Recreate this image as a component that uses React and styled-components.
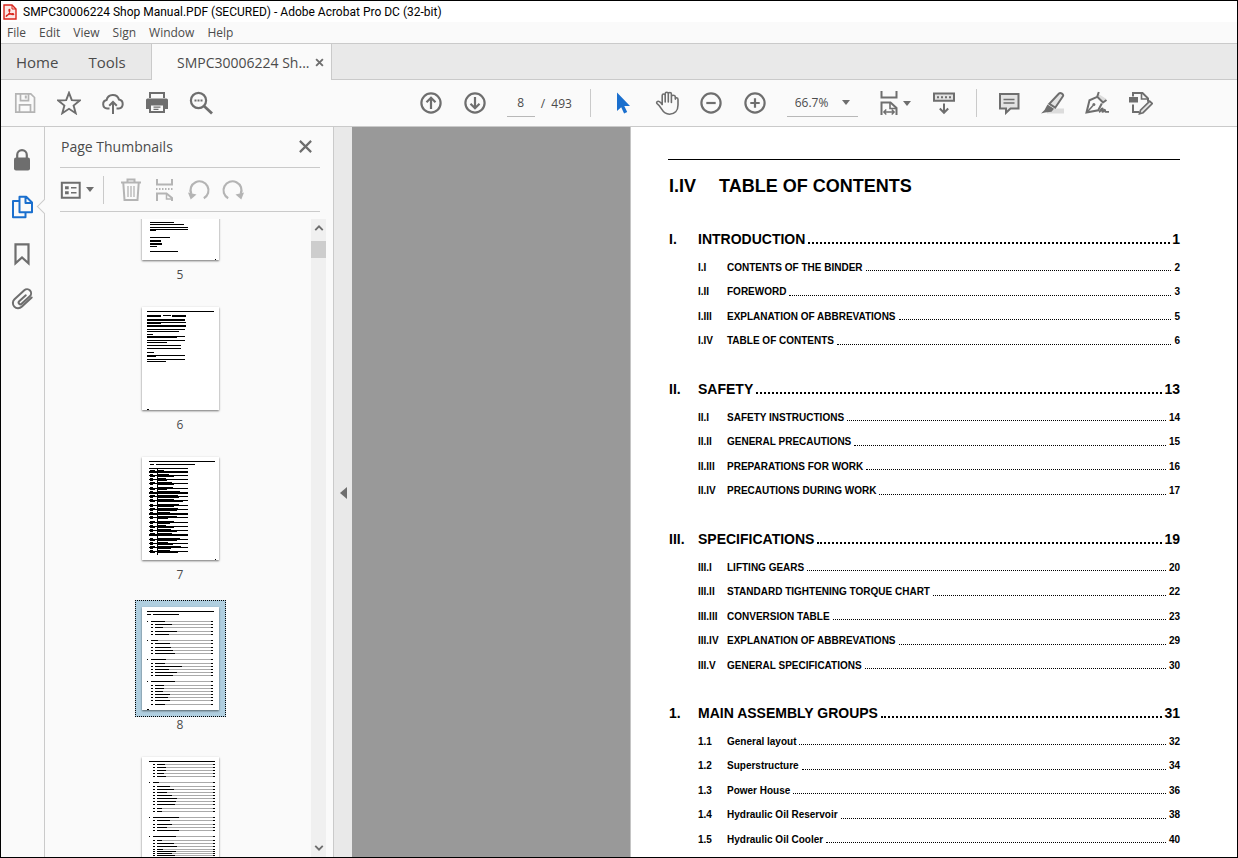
import React, { useLayoutEffect, useRef } from 'react';
import styled, { createGlobalStyle, css } from 'styled-components';

const GlobalStyle = createGlobalStyle`
  * {
    box-sizing: border-box;
  }

  body {
    margin: 0;
    font-family: 'Open Sans', 'Noto Sans', sans-serif;
    font-size: 12px;
    color: #4b4b4b;
  }

  button,
  input,
  select {
    font: inherit;
    color: inherit;
  }

  ul,
  ol {
    list-style: none;
    margin: 0;
    padding: 0;
  }
`;

const Window = styled.div`
  display: flex;
  flex-direction: column;
  height: 100vh;
  overflow: hidden;
  border: 1px solid #000;
  background: #fafafa;
`;

const TitleBar = styled.header`
  display: flex;
  align-items: center;
  gap: 6px;
  height: 21px;
  padding-left: 2px;
  background: #fff;
`;

const WindowTitle = styled.h1`
  margin: 0;
  font-family: Roboto, 'Open Sans', sans-serif;
  font-size: 12px;
  font-weight: normal;
  color: #000;
  white-space: nowrap;
`;

const MenuBar = styled.nav`
  display: flex;
  gap: 13px;
  height: 21px;
  padding-left: 6px;
`;

const MenuItem = styled.button`
  padding: 0;
  border: 0;
  background: none;
`;

const TabBar = styled.div`
  display: flex;
  height: 37px;
  border-top: 1px solid #cacaca;
  border-bottom: 1px solid #cacaca;
  background: #e9e9e9;
`;

const Tab = styled.button`
  padding: 0 15px;
  border: 0;
  background: none;
  font-size: 15px;
`;

const HomeTabs = styled.div`
  display: flex;
  width: 150px;
`;

const DocumentTab = styled.div`
  display: flex;
  align-items: center;
  gap: 6px;
  width: 181px;
  height: 36px;
  padding-left: 10px;
  border-left: 1px solid #cacaca;
  border-right: 1px solid #cacaca;
  background: #fafafa;
`;

const DocumentName = styled(Tab)`
  padding: 0 0 0 15px;
  font-size: 14px;
  white-space: nowrap;
`;

const IconButton = styled.button`
  display: flex;
  align-items: center;
  justify-content: center;
  flex: none;
  width: ${({ $width }) => $width || 44}px;
  height: ${({ $height }) => $height || 44}px;
  padding: 0;
  border: 0;
  background: none;
  color: ${({ $tone }) => $tone || '#6e6e6e'};

  svg {
    flex: none;
  }
`;

const Toolbar = styled.div`
  display: flex;
  align-items: center;
  height: 47px;
  padding-left: 2px;
  border-bottom: 1px solid #cacaca;
`;

const ToolGroup = styled.div`
  display: flex;
  align-items: center;
`;

const Spacer = styled.div`
  flex: ${({ $grow }) => $grow} 0 0;
`;

const Divider = styled.div`
  width: 1px;
  height: 28px;
  margin: ${({ $margin }) => $margin || '0 10px'};
  background: #cacaca;
`;

const PageInput = styled.input`
  width: 28px;
  height: 28px;
  margin-left: 10px;
  padding: 0;
  border: 0;
  border-bottom: 1px solid #b8b8b8;
  background: none;
  text-align: center;
`;

const PageCount = styled.span`
  width: 35px;
  margin: 0 4px 0 6px;
  white-space: pre;
`;

const ZoomField = styled.div`
  display: flex;
  align-items: center;
  width: 71px;
  height: 28px;
  margin: 0 12px 0 10px;
  padding-right: 8px;
  border-bottom: 1px solid #b8b8b8;
`;

const ZoomSelect = styled.select`
  flex: 1;
  min-width: 0;
  padding: 0 0 0 8px;
  border: 0;
  background: none;
  appearance: none;
`;

const Caret = styled.span`
  flex: none;
  border: 4px solid transparent;
  border-top: 5px solid #6e6e6e;
  border-bottom: 0;
`;

const FitButton = styled(IconButton)`
  justify-content: flex-start;
  gap: 2px;
  padding-left: 7px;
`;

const OptionsButton = styled(IconButton)`
  justify-content: flex-start;
  gap: 4px;
`;

const Main = styled.div`
  display: flex;
  flex: 1;
  min-height: 0;
`;

const Rail = styled.nav`
  display: flex;
  flex-direction: column;
  width: 44px;
  padding-top: 9px;
  border-right: 1px solid #cacaca;
`;

const RailButton = styled(IconButton)`
  position: relative;

  ${({ $active }) => $active && css`
    &::after {
      content: '';
      position: absolute;
      top: 18px;
      right: -7px;
      width: 10px;
      height: 10px;
      border-left: 1px solid #cacaca;
      border-bottom: 1px solid #cacaca;
      background: #fafafa;
      transform: rotate(45deg);
    }
  `}
`;

const Panel = styled.aside`
  display: flex;
  flex-direction: column;
  width: 289px;
  border-right: 1px solid #cacaca;
`;

const PanelHeader = styled.div`
  display: flex;
  align-items: center;
  justify-content: space-between;
  height: 41px;
  margin: 0 13px 0 15px;
  padding: 0 0 2px 1px;
  border-bottom: 1px solid #cacaca;
`;

const PanelTitle = styled.h2`
  margin: 0;
  font-size: 14px;
  font-weight: normal;
`;

const PanelTools = styled.div`
  display: flex;
  align-items: center;
  height: 44px;
  margin: 0 13px 7px 15px;
  border-bottom: 1px solid #cacaca;
`;

const PanelBody = styled.div`
  display: flex;
  flex: 1;
  min-height: 0;
`;

const ThumbList = styled.ol`
  flex: 1;
  overflow-y: auto;
  scrollbar-width: none;
`;

const ThumbItem = styled.li`
  display: flex;
  flex-direction: column;
  align-items: center;
  height: 150px;
  padding-left: 4px;
`;

const ThumbFrame = styled.button`
  display: block;
  padding: 6px;
  border: 1px dotted ${({ $selected }) => ($selected ? '#000' : 'transparent')};
  background: ${({ $selected }) => ($selected ? '#b0cfe0' : 'none')};

  svg {
    display: block;
    background: #fff;
    box-shadow: 0 1px 2px rgba(0, 0, 0, 0.55);
  }
`;

const ThumbLabel = styled.span`
  line-height: 16px;
`;

const ScrollBar = styled.div`
  display: flex;
  flex-direction: column;
  width: 15px;
  margin-right: 7px;
  background: #f0f0f0;
`;

const ScrollThumb = styled.div`
  height: 17px;
  margin-top: 4px;
  margin-bottom: auto;
  background: #cdcdcd;
`;

const Splitter = styled.button`
  display: flex;
  align-items: center;
  justify-content: center;
  width: 18px;
  padding: 2px 0 0;
  border: 0;
  background: #e9e9e9;
`;

const SplitterArrow = styled.span`
  border: 6px solid transparent;
  border-right: 7px solid #6e6e6e;
  border-left: 0;
`;

const Canvas = styled.main`
  flex: 1;
  min-width: 0;
  overflow: hidden;
  padding-left: 278px;
  background: #999;
`;

const Page = styled.article`
  min-height: 100%;
  padding: 32px 57px 0 37px;
  border-left: 1px solid #c4c4c4;
  background: #fff;
  color: #000;
  font-family: 'Liberation Sans', Arial, sans-serif;
  font-weight: bold;
`;

const PageTitle = styled.h2`
  display: flex;
  margin: 0 0 27px;
  padding: 16px 0 0 1px;
  border-top: 1px solid #000;
  font-size: 18px;
  line-height: 20px;
`;

const TitleNumber = styled.span`
  width: 50px;
`;

const Section = styled.section`
  margin-bottom: 20px;
  padding-left: 1px;
`;

const EntryNumber = styled.span`
  flex: none;
  width: 29px;
`;

const Leader = styled.span`
  flex: 1;
  align-self: center;
  height: 10px;
  margin: 0 2px 0 3px;
  border-bottom: ${({ $weight }) => $weight}px dotted #000;
`;

const SectionHeading = styled.h3`
  display: flex;
  align-items: center;
  height: 32px;
  margin: 0;
  font-size: 14px;
  white-space: nowrap;
`;

const Entry = styled.li`
  display: flex;
  align-items: center;
  height: 24px;
  margin-left: 29px;
  font-size: 10px;
  white-space: nowrap;

  &:nth-child(even) {
    height: 25px;
  }

  ${Leader} {
    height: 8px;
    margin-right: 3px;
  }
`;

const contents = [
  {
    number: 'I.',
    title: 'INTRODUCTION',
    page: 1,
    entries: [
      ['I.I', 'CONTENTS OF THE BINDER', 2],
      ['I.II', 'FOREWORD', 3],
      ['I.III', 'EXPLANATION OF ABBREVATIONS', 5],
      ['I.IV', 'TABLE OF CONTENTS', 6],
    ],
  },
  {
    number: 'II.',
    title: 'SAFETY',
    page: 13,
    entries: [
      ['II.I', 'SAFETY INSTRUCTIONS', 14],
      ['II.II', 'GENERAL PRECAUTIONS', 15],
      ['II.III', 'PREPARATIONS FOR WORK', 16],
      ['II.IV', 'PRECAUTIONS DURING WORK', 17],
    ],
  },
  {
    number: 'III.',
    title: 'SPECIFICATIONS',
    page: 19,
    entries: [
      ['III.I', 'LIFTING GEARS', 20],
      ['III.II', 'STANDARD TIGHTENING TORQUE CHART', 22],
      ['III.III', 'CONVERSION TABLE', 23],
      ['III.IV', 'EXPLANATION OF ABBREVATIONS', 29],
      ['III.V', 'GENERAL SPECIFICATIONS', 30],
    ],
  },
  {
    number: '1.',
    title: 'MAIN ASSEMBLY GROUPS',
    page: 31,
    entries: [
      ['1.1', 'General layout', 32],
      ['1.2', 'Superstructure', 34],
      ['1.3', 'Power House', 36],
      ['1.4', 'Hydraulic Oil Reservoir', 38],
      ['1.5', 'Hydraulic Oil Cooler', 40],
    ],
  },
];

const thumbnails = [
  { page: 5, label: true },
  { page: 6, label: true },
  { page: 7, label: true },
  { page: 8, label: true },
  { page: 9, label: false },
];

// Marks of each miniature page: [x, y, width, height]
const thumbMarks = {
  5: [
    [8, 65, 24, 1], [8, 67, 34, 1], [8, 70, 38, 1], [8, 72, 38, 1], [8, 73, 6, 1],
    [8, 80, 20, 1], [8, 83, 11, 2], [8, 86, 12, 2], [8, 89, 7, 1], [8, 94, 28, 1], [73, 102, 1, 1],
  ],
  6: [
    [5, 4, 67, 1], [5, 8, 14, 2], [21, 8, 8, 1], [30, 8, 14, 2], [5, 12, 38, 2], [5, 15, 39, 1],
    [5, 16, 14, 1], [5, 18, 39, 2], [5, 22, 38, 1], [5, 24, 32, 1], [5, 27, 6, 1], [5, 29, 38, 1],
    [5, 30, 30, 1], [5, 33, 38, 1], [5, 35, 20, 1], [5, 38, 34, 1], [5, 41, 34, 1],
    [5, 45, 7, 1], [5, 48, 38, 1], [5, 49, 9, 1], [5, 52, 38, 1], [5, 54, 19, 1], [5, 102, 2, 1],
  ],
  7: [[7, 4, 66, 1], [8, 7, 4, 1], [14, 7, 39, 1], [7, 11, 39, 1], [15, 11, 1, 87], [73, 102, 1, 1]],
  8: [[5, 4, 67, 1], [5, 7, 4, 1], [11, 7, 26, 1], [5, 102, 2, 1]],
  9: [[7, 4, 66, 1]],
};

const glossaryWidths = [
  6, 12, 11, 16, 8, 9, 14, 16, 15, 9, 22, 14, 20, 21, 16, 25, 21, 16, 20, 19,
  12, 22, 19, 10, 16, 12, 8, 16, 13, 19, 14, 18, 22, 19, 10, 15, 23, 13, 12, 20,
];

// [y, heading, width of title]
const tocLines8 = [
  [14, 1, 14], [17, 0, 17], [20, 0, 8], [24, 0, 22], [27, 0, 14],
  [33, 1, 7], [36, 0, 15], [40, 0, 16], [43, 0, 18], [46, 0, 20],
  [52, 1, 15], [56, 0, 10], [59, 0, 27], [62, 0, 14], [65, 0, 22], [68, 0, 18],
  [74, 1, 24], [78, 0, 9], [81, 0, 9], [84, 0, 8], [87, 0, 15], [90, 0, 13], [93, 0, 15], [97, 0, 10],
];

const tocLines9 = [
  [7, 0, 8], [10, 0, 9], [13, 0, 9], [16, 0, 7], [19, 0, 9], [25, 1, 6],
  [29, 0, 13], [32, 0, 17], [35, 0, 10], [38, 0, 15], [41, 0, 20], [44, 0, 19], [47, 0, 18],
  [51, 0, 5], [54, 0, 5], [60, 1, 26], [63, 0, 13], [67, 0, 15], [70, 0, 10], [73, 0, 22],
  [79, 1, 23], [83, 0, 5], [86, 0, 17], [89, 0, 20], [92, 0, 6], [94, 0, 19], [96, 0, 15], [98, 0, 18], [101, 0, 12],
];

const Icon = ({ size = 24, children, ...rest }) => (
  <svg
    width={size}
    height={size}
    viewBox="0 0 24 24"
    fill="none"
    stroke="currentColor"
    strokeWidth="2"
    aria-hidden="true"
    {...rest}
  >
    {children}
  </svg>
);

const AcrobatIcon = () => (
  <svg width="14" height="16" viewBox="0 0 14 16" fill="none" aria-hidden="true">
    <path d="M1 1h8l4 4v10H1z" fill="#fbe9e7" stroke="#d9251c" strokeWidth="1.4" />
    <path d="M9 1v4h4" stroke="#d9251c" />
    <path
      d="M3.5 12.3c1.5-.6 3.4-4 3.4-6 0-1.2-1-1.2-1 0 0 2 2.2 4.5 4.3 4.4 1-.1.8-1.1-.6-1.1-2 0-4.4.7-5.7 1.6-.8.6-1 1.3-.4 1.1z"
      stroke="#d9251c"
      strokeWidth="1.1"
    />
  </svg>
);

const SaveIcon = () => (
  <Icon strokeWidth="1.7">
    <path d="M2.8 2.8h15l3.7 3.7v14.7H2.8z" />
    <path d="M7.5 3v6.7h8V3M6.5 21v-7.2h11V21" />
    <path d="M12.8 4.5v3" strokeWidth="2" />
  </Icon>
);

const StarIcon = () => (
  <Icon strokeWidth="1.9">
    <path d="M12 1.8l2.8 7.3 8 .4-6.2 5 2.1 7.7-6.7-4.4-6.7 4.4 2.1-7.7-6.2-5 8-.4z" />
  </Icon>
);

const CloudIcon = () => (
  <Icon>
    <path d="M8.5 17.5H6.200a4.3 4.3 0 0 1-.6-8.500A6.400 6.400 0 0 1 18 8.600a4.5 4.5 0 0 1-.3 8.900h-2.200" />
    <path d="M12 23V11.500M8.200 14.800L12 11l3.800 3.800" />
  </Icon>
);

const PrintIcon = () => (
  <Icon stroke="none" fill="currentColor">
    <path d="M4 1h16v6H4z" />
    <path d="M6 3h12v4H6z" fill="#fafafa" />
    <path d="M2.500 7.500h19a1.500 1.500 0 0 1 1.500 1.500v9h-4v-4H5v4H1V9a1.500 1.500 0 0 1 1.500-1.500z" />
    <path d="M4 13h16v9H4z" />
    <path d="M6 14.500h12V20H6z" fill="#fafafa" />
    <path d="M8.500 15.500h7v1.200h-7zM8.500 17.700h5v1.200h-5z" />
  </Icon>
);

const SearchIcon = () => (
  <Icon strokeWidth="2.2">
    <circle cx="9.5" cy="9.5" r="7.6" />
    <path d="M15 15l8 7.500" strokeWidth="2.8" />
    <path d="M5.500 9.500h2M8.500 9.500h2M11.500 9.500h2" />
  </Icon>
);

const CircleIcon = ({ children }) => (
  <Icon strokeWidth="2.2">
    <circle cx="12" cy="12" r="9.6" />
    {children}
  </Icon>
);

const PointerIcon = () => (
  <Icon stroke="none" fill="currentColor">
    <path d="M6 1.500v18.500l4.200-3.800 2.900 6.300 3.100-1.400-2.900-6.100h5.700z" />
  </Icon>
);

const HandIcon = () => (
  <Icon strokeWidth="1.6" strokeLinejoin="round" strokeLinecap="round">
    <path d="M7.200 13.500V4.500a1.500 1.500 0 0 1 3 0v6.500V2.800a1.500 1.500 0 0 1 3.100 0v8.200V3a1.500 1.500 0 0 1 3.100 0v8.500V5.600c0-1.900 3.600-1.900 3.900 0v2.500c.2-1.900 2.700-1.600 2.700.3v5.600c0 5.800-3.400 9.200-8.500 9.200-3.900 0-6-1.900-8-5.300-1.200-2.100-2.200-3.700-4.400-5.300-1.300-1 .4-3.100 2.300-2 1.400.8 2 1.700 2.800 2.900z" />
  </Icon>
);

const FitIcon = () => (
  <Icon>
    <path d="M4.500 0v6.500h15V0" />
    <path d="M4.500 24V11.500h9l6 5.500v7" />
    <path d="M13 11.500v6h6" strokeWidth="1.6" />
    <path d="M7 21h10M9.300 18.500L6.800 21l2.500 2.500M14.700 18.500l2.500 2.500-2.500 2.500" strokeWidth="1.4" />
  </Icon>
);

const ScrollModeIcon = () => (
  <Icon>
    <path d="M2 2.500h20v7.300H2z" fill="#e3e3e3" />
    <path d="M5 6.200h15" strokeDasharray="2 2" />
    <path d="M12 12.500V21M7.800 17.500l4.200 4.300 4.200-4.300" />
  </Icon>
);

const CommentIcon = () => (
  <Icon>
    <path d="M3 3h18.500v14.500h-8L9 21.800v-4.300H3z" fill="#e3e3e3" />
    <path d="M6.500 8.500h11M6.500 12h11" strokeWidth="1.3" />
  </Icon>
);

const HighlightIcon = () => (
  <Icon>
    <path d="M6 17.500h17v5H6z" fill="#dcdcdc" stroke="none" />
    <path d="M18 2.500c1.600-1.300 5 .9 3.900 2.800l-7.700 11.400-5.900-3.900z" fill="#e3e3e3" />
    <path d="M6.500 13.500l6.500 4.300-2.500 2.900-6.500.8L0 22.500 3.500 19z" fill="currentColor" stroke="none" />
  </Icon>
);

const SignIcon = () => (
  <Icon strokeWidth="2">
    <path d="M13.500 3l8 5-3.500 3-5.500-5z" fill="#dcdcdc" stroke="none" />
    <path d="M13.800 1l-1.600 4.800L18 11.500l3.500-2.500M12.200 5.800L4.500 9.300 1.500 21.500l11.700-2.200 3.600-6.800" />
    <path d="M1.800 21.500l6.200-7" strokeWidth="1.5" />
    <circle cx="8.900" cy="13.500" r="1.500" fill="currentColor" stroke="none" />
    <path d="M14 21c1.600-.6 2.600-4.300 3.600-3.500.7.600-1 3 0 3.300 1 .1 1.600-2.500 2.300-1.900.6.500-.1 1.900.6 2h3.500" strokeWidth="1.900" />
  </Icon>
);

const EditPdfIcon = () => (
  <Icon>
    <path d="M0 6h9v5.500H0z" fill="currentColor" stroke="none" />
    <path d="M4 5.500V2h9.500L19 7.400v3.300M4 13.500v7.500h6" />
    <path d="M12.500 2v6h6" strokeWidth="1.6" />
    <path d="M20.700 10.200l2.600 2.400-9.200 9.100-3.600 1 1-3.500z" fill="#e3e3e3" strokeWidth="1.7" />
  </Icon>
);

const LockIcon = () => (
  <Icon strokeWidth="2.2">
    <path d="M7.200 11V7a4.800 4.800 0 0 1 9.600 0v4" />
    <rect x="4" y="9.5" width="16" height="13" rx="2" fill="currentColor" stroke="none" />
  </Icon>
);

const PagesIcon = () => (
  <Icon strokeLinejoin="round">
    <path d="M9.500 1.800h6.700l5.800 5.700v9.700H9.500zM15.500 2v6h6" />
    <path d="M9 6H3v16.200h12.500v-4.500" />
  </Icon>
);

const BookmarkIcon = () => (
  <Icon strokeWidth="2.2">
    <path d="M5.500 2.300h13v19L12 15.500l-6.500 5.800z" />
  </Icon>
);

const ClipIcon = () => (
  <Icon strokeLinecap="round">
    <path d="M15.800 8.300l-6.600 6a1.700 1.700 0 0 0 2.400 2.500l8.200-7.600a4 4 0 0 0-5.500-5.900L4.500 12.200a5.200 5.200 0 0 0 7.200 7.600l10-9.300" />
  </Icon>
);

const CloseIcon = ({ size, weight }) => (
  <Icon size={size} strokeWidth={weight}>
    <path d="M3 3l18 18M21 3L3 21" />
  </Icon>
);

const OptionsIcon = () => (
  <Icon size={22} strokeWidth="2.2">
    <path d="M2 4h19.500v16.500H2z" />
    <path d="M5.500 9.500h4M5.500 15h4" strokeWidth="3.3" />
    <path d="M12 9.500h6M12 15h6" strokeWidth="1.8" />
  </Icon>
);

const TrashIcon = () => (
  <Icon>
    <path d="M2 4.500h20M8.500 4V1.500h7V4M4.300 5l1.200 17h13l1.200-17" />
    <path d="M9 8v11M12 8v11M15 8v11" strokeWidth="1.3" />
  </Icon>
);

const SplitIcon = () => (
  <Icon>
    <path d="M4 1v5.500h15V1M4 23v-7.500h9.500L19 20v3" />
    <path d="M13.500 16v5h5" strokeWidth="1.5" />
    <path d="M3 11h18" strokeDasharray="1.5 1.5" strokeWidth="1.8" />
  </Icon>
);

const RotateIcon = ({ clockwise }) => (
  <Icon strokeWidth="2.2">
    <g transform={clockwise ? 'translate(24 0) scale(-1 1)' : undefined}>
      <path d="M4.300 16a9 9 0 1 1 12.500 4.200" />
      <path d="M1 14.500l8.500 2-5.800 5z" fill="currentColor" stroke="none" />
    </g>
  </Icon>
);

const ChevronIcon = ({ down }) => (
  <Icon size={10} strokeWidth="4.5">
    <path d={down ? 'M3 7l9 9 9-9' : 'M3 17l9-9 9 9'} />
  </Icon>
);

const TocMarks = ({ lines, left, right }) => lines.map(([y, heading, width]) => {
  const start = left + (heading ? 4 : 8);
  return (
    <g key={y}>
      <rect x={heading ? left : left + 4} y={y} width={heading ? 1 : 2} height="1" />
      <rect x={start} y={y} width={width} height="1" />
      <rect x={start + width} y={y} width={right - start - width} height="1" fill="#aaa" />
      <rect x={right - 1} y={y} width="2" height="1" />
    </g>
  );
});

const GlossaryMarks = () => glossaryWidths.map((width, i) => {
  const y = 13 + i * 2 + Math.floor(i / 8);
  return (
    <g key={y}>
      <rect x="8" y={y} width={i % 3 ? 3 : 5} height="1" />
      <rect x="16" y={y} width={width} height="1" />
      {i % 2 === 0 && <rect x="7" y={y + 1} width="39" height={i % 5 ? 1 : 2} />}
    </g>
  );
});

const Thumbnail = ({ page }) => (
  <svg width="77" height="103" viewBox="0 0 77 103" shapeRendering="crispEdges" aria-hidden="true">
    {thumbMarks[page].map(([x, y, width, height]) => (
      <rect key={`${x}-${y}`} x={x} y={y} width={width} height={height} />
    ))}
    {page === 7 && <GlossaryMarks />}
    {page === 8 && <TocMarks lines={tocLines8} left={5} right={70} />}
    {page === 9 && <TocMarks lines={tocLines9} left={7} right={72} />}
  </svg>
);

const TopToolbar = () => (
  <Toolbar>
    <ToolGroup>
      <IconButton aria-label="Save" $tone="#b4b4b4"><SaveIcon /></IconButton>
      <IconButton aria-label="Star"><StarIcon /></IconButton>
      <IconButton aria-label="Upload"><CloudIcon /></IconButton>
      <IconButton aria-label="Print"><PrintIcon /></IconButton>
      <IconButton aria-label="Find"><SearchIcon /></IconButton>
    </ToolGroup>
    <Spacer $grow={5} />
    <ToolGroup>
      <IconButton aria-label="Previous page">
        <CircleIcon><path d="M12 18V7M7.500 11.300L12 6.800l4.500 4.500" /></CircleIcon>
      </IconButton>
      <IconButton aria-label="Next page">
        <CircleIcon><path d="M12 6v11M7.500 12.700l4.500 4.500 4.500-4.500" /></CircleIcon>
      </IconButton>
      <PageInput aria-label="Page number" defaultValue="8" />
      <PageCount>/  493</PageCount>
      <Divider />
      <IconButton aria-label="Select" $tone="#1a6fce"><PointerIcon /></IconButton>
      <IconButton aria-label="Pan"><HandIcon /></IconButton>
      <IconButton aria-label="Zoom out">
        <CircleIcon><path d="M7.300 12h9.400" /></CircleIcon>
      </IconButton>
      <IconButton aria-label="Zoom in">
        <CircleIcon><path d="M7.300 12h9.400M12 7.300v9.400" /></CircleIcon>
      </IconButton>
      <ZoomField>
        <ZoomSelect aria-label="Zoom level" defaultValue="66.7%">
          <option>66.7%</option>
          <option>100%</option>
        </ZoomSelect>
        <Caret />
      </ZoomField>
      <FitButton aria-label="Page fit" $width={52}>
        <FitIcon />
        <Caret />
      </FitButton>
      <IconButton aria-label="Scroll mode"><ScrollModeIcon /></IconButton>
      <Divider />
      <IconButton aria-label="Comment"><CommentIcon /></IconButton>
      <IconButton aria-label="Highlight"><HighlightIcon /></IconButton>
      <IconButton aria-label="Sign"><SignIcon /></IconButton>
      <IconButton aria-label="Edit PDF"><EditPdfIcon /></IconButton>
    </ToolGroup>
    <Spacer $grow={2} />
  </Toolbar>
);

const ThumbnailPanel = () => {
  const list = useRef(null);

  useLayoutEffect(() => {
    list.current.scrollTop = 69;
  }, []);

  return (
    <Panel>
      <PanelHeader>
        <PanelTitle>Page Thumbnails</PanelTitle>
        <IconButton aria-label="Close panel" $width={30} $height={30}>
          <CloseIcon size={15} weight={3.5} />
        </IconButton>
      </PanelHeader>
      <PanelTools>
        <OptionsButton aria-label="Options" $width={36}>
          <OptionsIcon />
          <Caret />
        </OptionsButton>
        <Divider $margin="0 10px 0 7px" />
        <IconButton aria-label="Delete pages" $width={34} $tone="#b4b4b4"><TrashIcon /></IconButton>
        <IconButton aria-label="Split pages" $width={34} $tone="#b4b4b4"><SplitIcon /></IconButton>
        <IconButton aria-label="Rotate left" $width={34} $tone="#b4b4b4"><RotateIcon /></IconButton>
        <IconButton aria-label="Rotate right" $width={34} $tone="#b4b4b4"><RotateIcon clockwise /></IconButton>
      </PanelTools>
      <PanelBody>
        <ThumbList ref={list}>
          {thumbnails.map(({ page, label }) => (
            <ThumbItem key={page}>
              <ThumbFrame $selected={page === 8} aria-label={`Go to page ${page}`}>
                <Thumbnail page={page} />
              </ThumbFrame>
              {label && <ThumbLabel>{page}</ThumbLabel>}
            </ThumbItem>
          ))}
        </ThumbList>
        <ScrollBar>
          <IconButton aria-label="Scroll up" $width={15} $height={18}><ChevronIcon /></IconButton>
          <ScrollThumb />
          <IconButton aria-label="Scroll down" $width={15} $height={18}><ChevronIcon down /></IconButton>
        </ScrollBar>
      </PanelBody>
    </Panel>
  );
};

const DocumentPage = () => (
  <Page>
    <PageTitle>
      <TitleNumber>I.IV</TitleNumber>
      TABLE OF CONTENTS
    </PageTitle>
    {contents.map(section => (
      <Section key={section.number}>
        <SectionHeading>
          <EntryNumber>{section.number}</EntryNumber>
          {section.title}
          <Leader $weight={2} />
          {section.page}
        </SectionHeading>
        <ul>
          {section.entries.map(([number, title, page]) => (
            <Entry key={number}>
              <EntryNumber>{number}</EntryNumber>
              {title}
              <Leader $weight={1} />
              {page}
            </Entry>
          ))}
        </ul>
      </Section>
    ))}
  </Page>
);

const App = () => (
  <Window>
    <GlobalStyle />
    <TitleBar>
      <AcrobatIcon />
      <WindowTitle>SMPC30006224 Shop Manual.PDF (SECURED) - Adobe Acrobat Pro DC (32-bit)</WindowTitle>
    </TitleBar>
    <MenuBar>
      {['File', 'Edit', 'View', 'Sign', 'Window', 'Help'].map(name => (
        <MenuItem key={name}>{name}</MenuItem>
      ))}
    </MenuBar>
    <TabBar>
      <HomeTabs>
        <Tab>Home</Tab>
        <Tab>Tools</Tab>
      </HomeTabs>
      <DocumentTab>
        <DocumentName>SMPC30006224 Sh...</DocumentName>
        <IconButton aria-label="Close tab" $width={9} $height={20}>
          <CloseIcon size={9} weight={5} />
        </IconButton>
      </DocumentTab>
    </TabBar>
    <TopToolbar />
    <Main>
      <Rail>
        <RailButton aria-label="Security" $width={42} $height={47}><LockIcon /></RailButton>
        <RailButton aria-label="Page thumbnails" $width={42} $height={47} $tone="#1a6fce" $active><PagesIcon /></RailButton>
        <RailButton aria-label="Bookmarks" $width={42} $height={47}><BookmarkIcon /></RailButton>
        <RailButton aria-label="Attachments" $width={42}><ClipIcon /></RailButton>
      </Rail>
      <ThumbnailPanel />
      <Splitter aria-label="Collapse panel"><SplitterArrow /></Splitter>
      <Canvas>
        <DocumentPage />
      </Canvas>
    </Main>
  </Window>
);

export default App;
